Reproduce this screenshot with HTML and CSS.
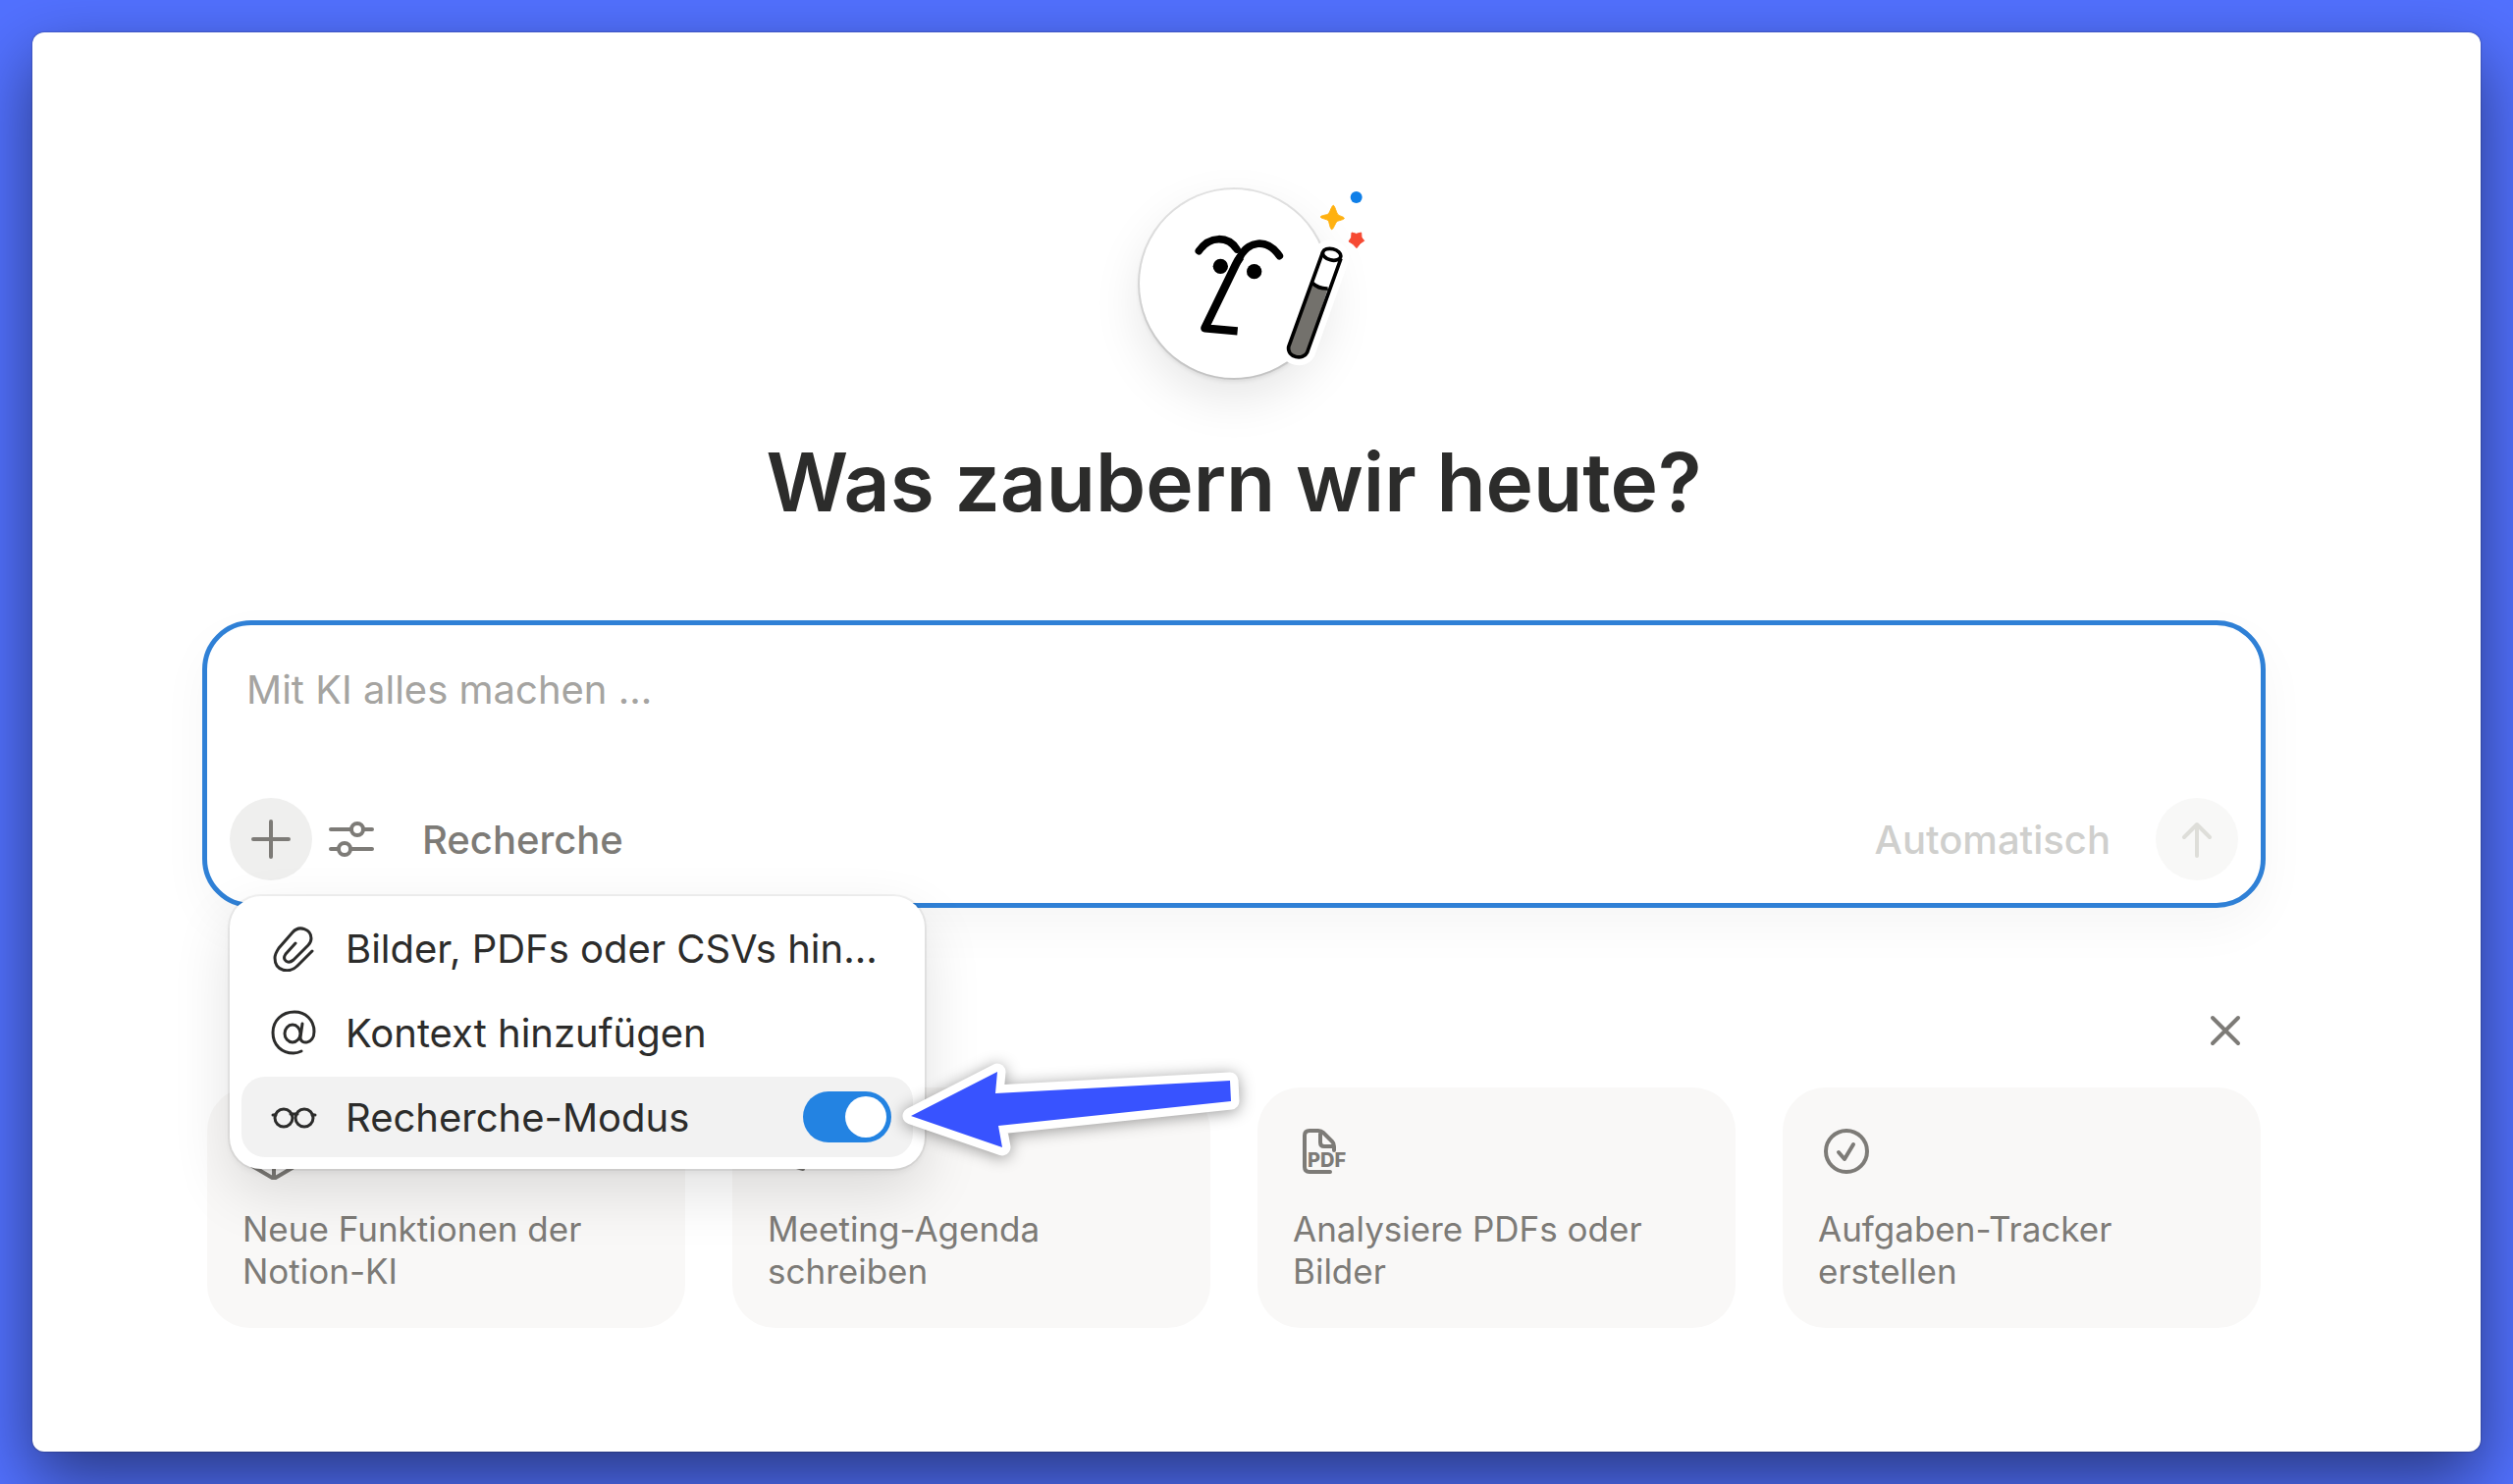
FILE: index.html
```html
<!DOCTYPE html>
<html lang="de">

<head>
    <meta charset="UTF-8">
    <meta name="viewport" content="width=device-width, initial-scale=1.0">
    <title>Notion-KI</title>
    <link rel="stylesheet" href="styles.css">
</head>

<body>
    <main class="window">
        <div class="avatar">
            <svg class="avatar-face" viewBox="90 64 576 576" aria-hidden="true">
                <!-- face -->
                <g fill="none" stroke="#000" stroke-width="23">
                    <path d="M271 252C304 204 360 206 387 247" stroke-linecap="round" />
                    <path d="M517 267C480 214 420 216 392 280" stroke-linecap="round" />
                    <path d="M398 270Q390 280 384 293L289 488L389 497" stroke-linejoin="round" stroke-width="25" />
                </g>
                <g fill="#000">
                    <circle cx="337" cy="299" r="23" />
                    <circle cx="440" cy="315" r="23" />
                </g>
                <!-- wand -->
                <path d="M650 255L545 545C540 578 590 588 602 562L705 275C706 244 660 234 650 255Z" fill="#fff" stroke="#fff" stroke-width="50" stroke-linejoin="round" />
                <path d="M618 350Q636 368 665 367L602 562C590 588 540 578 545 545Z" fill="#73716c" />
                <path d="M650 255L545 545C540 578 590 588 602 562L705 275M618 350Q636 368 665 367" fill="none" stroke="#000" stroke-width="11" />
                <ellipse cx="677" cy="263" rx="28" ry="17" transform="rotate(14 677 263)" fill="#fff" stroke="#000" stroke-width="11" />
                <!-- sparks -->
                <circle cx="752" cy="88" r="18" fill="#0f7fe8" />
                <path d="M682 113C686 113 692 138 696 141C700 145 715 148 715 152C715 157 697 158 692 163C687 168 682 186 677 186C672 186 670 164 666 159C661 154 643 153 643 148C643 143 663 143 667 138C672 133 677 113 682 113Z" fill="#ffb110" stroke="#ffb110" stroke-width="3" />
                <path d="M738 196L752 200L767 196L768 211L776 221L764 229L753 243L742 231L729 223L737 211Z" fill="#f64932" stroke="#f64932" stroke-width="3" stroke-linejoin="round" />
            </svg>
        </div>

        <h1 class="title">Was zaubern wir heute?</h1>

        <form class="composer">
            <textarea class="prompt" placeholder="Mit KI alles machen ..." aria-label="Mit KI alles machen"></textarea>
            <div class="toolbar">
                <button type="button" class="round-btn" aria-label="Hinzufügen">
                    <svg width="44" height="44" viewBox="0 0 44 44"><path d="M22 4V40M4 22H40" /></svg>
                </button>
                <button type="button" class="icon-btn" aria-label="Einstellungen">
                    <svg width="48" height="44" viewBox="0 0 48 44">
                        <path d="M3 12H24M37 12H45M3 32H11M24 32H45" />
                        <circle cx="30" cy="12" r="6" />
                        <circle cx="17" cy="32" r="6" />
                    </svg>
                </button>
                <button type="button" class="text-btn">Recherche</button>
                <button type="button" class="text-btn model-btn">Automatisch</button>
                <button type="submit" class="round-btn send-btn" aria-label="Senden" disabled>
                    <svg width="44" height="44" viewBox="0 0 44 44"><path d="M22 39V7M9 20L22 7L35 20" /></svg>
                </button>
            </div>

            <div class="menu">
                <button type="button" class="menu-item">
                    <svg width="48" height="48" viewBox="0 0 48 48">
                        <path d="M43 27L28 42C20 50 5 48 5 34C5 30 7 27 9 24L23 8C30 0 42 5 42 14C42 17 41 19 39 21L24 36C18 41 12 36 16 30L26 19" />
                    </svg>
                    <span>Bilder, PDFs oder CSVs hin...</span>
                </button>
                <button type="button" class="menu-item">
                    <svg width="48" height="48" viewBox="0 0 48 48">
                        <ellipse cx="23" cy="25" rx="8" ry="9" />
                        <path d="M33 15L31 29C31 37 45 36 45 23C45 11 36 3 25 3C12 3 3 12 3 24C3 37 12 45 24 45C28 45 30 44 32 43" />
                    </svg>
                    <span>Kontext hinzufügen</span>
                </button>
                <label class="menu-item active">
                    <svg width="48" height="48" viewBox="0 0 48 48">
                        <circle cx="14" cy="25" r="9" />
                        <circle cx="35" cy="25" r="9" />
                        <path d="M3 22H6M43 22H46M21 21H28" />
                    </svg>
                    <span>Recherche-Modus</span>
                    <input type="checkbox" class="toggle" checked>
                </label>
                <svg class="arrow" viewBox="0 0 380 120" aria-hidden="true">
                    <path class="arrow-outline" d="M18 66L106 21L104 43L343 30L344 51L107 76L111 98Z" />
                    <path class="arrow-fill" d="M18 66L106 21L104 43L343 30L344 51L107 76L111 98Z" />
                </svg>
            </div>
        </form>

        <section class="suggestions">
            <div class="suggestions-head">
                <button type="button" class="close-btn" aria-label="Schließen">
                    <svg width="32" height="32" viewBox="0 0 32 32"><path d="M3 3L29 29M29 3L3 29" /></svg>
                </button>
            </div>
            <div class="cards">
                <button type="button" class="card">
                    <svg width="58" height="58" viewBox="0 0 58 58"><path d="M32 8L54 20V44L32 57L10 44V20ZM10 20L32 32L54 20M32 32V57" /></svg>
                    <span>Neue Funktionen der Notion-KI</span>
                </button>
                <button type="button" class="card">
                    <svg width="58" height="58" viewBox="0 0 58 58"><path d="M8 8H50V40H36V47L20 42H8Z" /></svg>
                    <span>Meeting-Agenda schreiben</span>
                </button>
                <button type="button" class="card">
                    <svg width="58" height="58" viewBox="0 0 58 58">
                        <path d="M38 50H17Q12 50 12 45V13Q12 8 17 8H26Q29 8 31 10L40 19Q42 21 42 24V28M28 9V20Q28 24 32 24H41" />
                        <text x="15" y="45" class="pdf-text">PDF</text>
                    </svg>
                    <span>Analysiere PDFs oder Bilder</span>
                </button>
                <button type="button" class="card">
                    <svg width="58" height="58" viewBox="0 0 58 58">
                        <circle cx="29" cy="29" r="21" />
                        <path d="M21 30L27 37L36 22" />
                    </svg>
                    <span>Aufgaben-Tracker erstellen</span>
                </button>
            </div>
        </section>
    </main>
</body>

</html>
```
FILE: styles.css
```css
* {
    box-sizing: border-box;
}

body {
    display: flex;
    min-height: 100vh;
    margin: 0;
    padding: 33px;
    background-color: #5271ff;
    font-family: Inter, "Liberation Sans", sans-serif;
    color: #2c2c2b;
    overflow: hidden;
}

button {
    border: none;
    padding: 0;
    background: none;
    font: inherit;
    color: inherit;
    cursor: pointer;
}

svg {
    flex-shrink: 0;
    fill: none;
    stroke: currentColor;
    stroke-width: 4px;
    stroke-linecap: round;
    stroke-linejoin: round;
}

.window {
    flex: 1;
    display: flex;
    flex-direction: column;
    padding: 160px 219px 0 173px;
    background-color: #fff;
    border-radius: 12px;
    box-shadow: 0 0 2px rgba(0, 0, 0, 0.5), 0 28px 70px rgba(0, 0, 0, 0.5);
}

.avatar {
    align-self: center;
    width: 192px;
    height: 192px;
    border-radius: 50%;
    box-shadow: 0 0 0 2px rgba(0, 0, 0, 0.1), 0 3px 5px rgba(0, 0, 0, 0.1), 0 20px 50px rgba(0, 0, 0, 0.1);
}

.avatar-face {
    display: block;
    width: 100%;
    height: 100%;
    overflow: visible;
    stroke: none;
    stroke-linecap: butt;
}

.title {
    margin: 55px 0 88px;
    font-size: 82px;
    line-height: 104px;
    font-weight: 600;
    text-align: center;
}

/* composer */
.composer {
    position: relative;
    padding: 40px 23px 23px;
    border: 5px solid #2f80d6;
    border-radius: 50px;
    background-color: #fff;
    box-shadow: 0 20px 50px rgba(0, 0, 0, 0.04);
    font-size: 40px;
}

.prompt {
    display: block;
    width: 100%;
    height: 136px;
    padding: 0 17px;
    border: none;
    outline: none;
    resize: none;
    background: none;
    font: inherit;
    line-height: 52px;
}

.prompt::placeholder {
    color: #a5a4a1;
    opacity: 1;
}

.toolbar {
    display: flex;
    align-items: center;
    color: #7d7b77;
}

.round-btn {
    display: flex;
    align-items: center;
    justify-content: center;
    width: 84px;
    height: 84px;
    border-radius: 50%;
    background-color: #efefee;
}

.icon-btn {
    display: flex;
    margin: 0 48px 0 16px;
}

.text-btn {
    font-weight: 500;
}

.model-btn {
    margin: 0 46px 0 auto;
    color: #cfcfcd;
}

.send-btn {
    background-color: #f8f8f7;
    color: #deded9;
}

/* dropdown */
.menu {
    position: absolute;
    z-index: 1;
    top: calc(100% - 7px);
    left: 23px;
    display: flex;
    flex-direction: column;
    gap: 4px;
    width: 708px;
    padding: 12px;
    border-radius: 32px;
    background-color: #fff;
    box-shadow: 0 0 0 2px rgba(0, 0, 0, 0.05), 0 4px 6px rgba(0, 0, 0, 0.05), 0 24px 60px rgba(0, 0, 0, 0.12);
}

.menu-item {
    display: flex;
    align-items: center;
    gap: 29px;
    height: 82px;
    padding: 0 22px 0 29px;
    border-radius: 24px;
    white-space: nowrap;
    cursor: pointer;
}

.menu-item svg {
    stroke-width: 3px;
}

.menu-item.active {
    background-color: #f2f2f2;
}

.toggle {
    appearance: none;
    display: flex;
    justify-content: flex-end;
    width: 90px;
    height: 52px;
    margin: 0 0 0 auto;
    padding: 5px;
    border-radius: 26px;
    background-color: #2383e2;
}

.toggle::before {
    content: "";
    width: 42px;
    height: 42px;
    border-radius: 50%;
    background-color: #fff;
}

.arrow {
    position: absolute;
    top: 158px;
    left: 676px;
    width: 380px;
    height: 120px;
    overflow: visible;
    filter: drop-shadow(0 2px 8px rgba(0, 0, 0, 0.4));
}

.menu .arrow-outline {
    fill: #fff;
    stroke: #fff;
    stroke-width: 17px;
}

.menu .arrow-fill {
    fill: #3853ff;
    stroke: none;
}

/* suggestions */
.suggestions {
    padding: 95px 5px 0;
    color: #7d7b77;
}

.suggestions-head {
    display: flex;
    justify-content: flex-end;
    padding-right: 6px;
    margin-bottom: 28px;
}

.close-btn {
    display: flex;
    align-items: center;
    justify-content: center;
    width: 60px;
    height: 60px;
}

.cards {
    display: grid;
    grid-template-columns: repeat(4, 1fr);
    gap: 48px;
}

.card {
    display: flex;
    flex-direction: column;
    align-items: flex-start;
    gap: 29px;
    padding: 36px;
    border-radius: 44px;
    background-color: #f9f8f7;
    font-size: 35px;
    line-height: 43px;
    text-align: left;
}

.pdf-text {
    fill: currentColor;
    stroke: none;
    font-size: 20px;
    font-weight: 800;
}
```
